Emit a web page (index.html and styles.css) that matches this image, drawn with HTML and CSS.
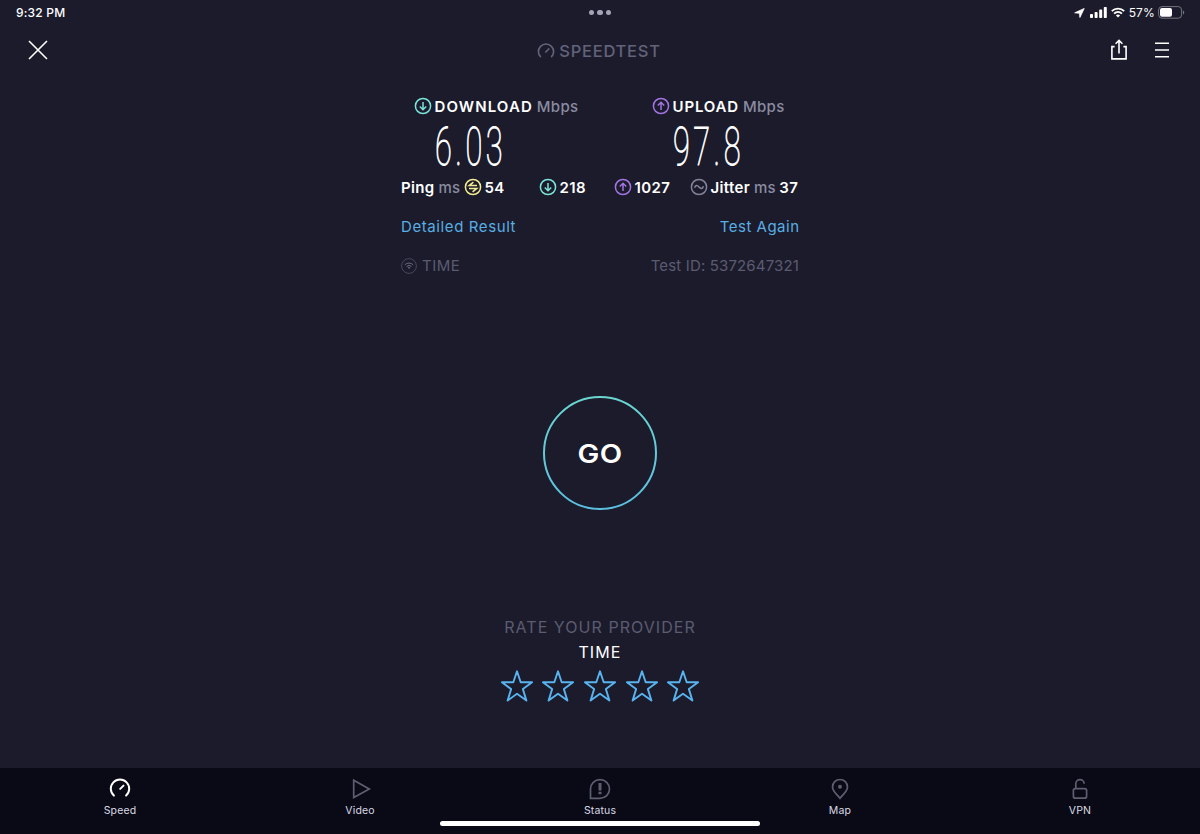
FILE: index.html
```html
<!DOCTYPE html>
<html lang="en">
<head>
  <meta charset="UTF-8" />
  <meta name="viewport" content="width=device-width, initial-scale=1.0" />
  <title>Speedtest</title>
  <link rel="stylesheet" href="styles.css">
</head>
<body>

  <!-- Shared icons -->
  <svg class="symbols" width="0" height="0">
    <symbol id="down" viewBox="0 0 18 18">
      <circle cx="9" cy="9" r="7.6" />
      <path d="M9 5v7.5M5.8 9.5L9 12.7l3.2-3.2" />
    </symbol>
    <symbol id="up" viewBox="0 0 18 18">
      <circle cx="9" cy="9" r="7.6" />
      <path d="M9 13V5.5M5.8 8.5L9 5.3l3.2 3.2" />
    </symbol>
    <symbol id="ping" viewBox="0 0 18 18">
      <circle cx="9" cy="9" r="7.6" />
      <path d="M13 7.6H5.2L9.4 4.2M5 10.4h7.8L8.600 13.8" />
    </symbol>
    <symbol id="jitter" viewBox="0 0 18 18">
      <circle cx="9" cy="9" r="7.6" />
      <path d="M4.6 9.8C5.4 7 7.200 7 9 9s3.600 2 4.400-.8" />
    </symbol>
    <symbol id="star" viewBox="0 0 34 34">
      <path d="M17 2.300l3.700 10.900h11.400l-9.200 6.900 3.500 11.500-9.400-6.900-9.400 6.900 3.500-11.500-9.200-6.900h11.400z" />
    </symbol>
  </svg>

  <div class="status-bar">
    <span class="clock">9:32 PM</span>
    <div class="dots"><i></i><i></i><i></i></div>
    <div class="system">
      <svg width="11" height="10" viewBox="0 0 11 10"><path fill="#fff" stroke="#fff" stroke-width=".8" stroke-linejoin="round" d="M10.200.5L5.900 9.500 5.500 5.300.7 4.800z" /></svg>
      <svg class="signal" width="17" height="11" viewBox="0 0 17 11" fill="#fff">
        <rect x="0" y="7" width="3" height="4" rx=".8" />
        <rect x="4.600" y="5" width="3" height="6" rx=".8" />
        <rect x="9.200" y="2.600" width="3" height="8.400" rx=".8" />
        <rect x="13.800" y="0" width="3" height="11" rx=".8" />
      </svg>
      <svg class="wifi" width="14" height="11" viewBox="0 0 14 11" fill="none" stroke="#fff" stroke-width="1.900">
        <path d="M.8 4.100a9 9 0 0 1 12.400 0M3.100 6.600a5.700 5.700 0 0 1 7.800 0" />
        <path d="M7 10.500L4.900 8.400a3.100 3.100 0 0 1 4.200 0z" fill="#fff" stroke="none" />
      </svg>
      <span class="percent">57%</span>
      <svg width="27" height="13" viewBox="0 0 27 13">
        <rect x=".6" y=".6" width="23" height="11.600" rx="3.400" fill="none" stroke="#76767f" />
        <rect x="2" y="2" width="12" height="8.800" rx="2" fill="#fff" />
        <path d="M25 4.400c1.700.6 1.700 3.400 0 4z" fill="#76767f" />
      </svg>
    </div>
  </div>

  <header class="title-bar">
    <svg class="close" width="20" height="20" viewBox="0 0 20 20"><path d="M1 1l18 18M19 1L1 19" /></svg>
    <div class="brand">
      <svg width="18" height="16" viewBox="0 0 18 16"><path d="M3.800 14.200a7.600 7.600 0 1 1 10.400 0M8.300 9.500l4-4.100" /></svg>
      <span>SPEEDTEST</span>
    </div>
    <div class="actions">
      <svg width="18" height="22" viewBox="0 0 18 22"><path d="M4.600 7.600H1.900v12.300h14.200V7.600h-2.700M9 14.500V1.500M5.600 4.800L9 1.400l3.400 3.400" /></svg>
      <svg width="16" height="16" viewBox="0 0 16 16"><path d="M1 1.200h14M1 8h14M1 14.800h14" /></svg>
    </div>
  </header>

  <main>
    <section class="results">
      <div class="speeds">
        <div class="speed">
          <div class="label">
            <svg class="icon teal"><use href="#down" /></svg>
            <b class="download">DOWNLOAD</b><span class="unit">Mbps</span>
          </div>
          <svg class="value" width="70" height="44"><text x="0" y="40.500" textLength="71" lengthAdjust="spacingAndGlyphs">6.03</text></svg>
        </div>
        <div class="speed">
          <div class="label">
            <svg class="icon purple"><use href="#up" /></svg>
            <b class="upload">UPLOAD</b><span class="unit">Mbps</span>
          </div>
          <svg class="value" width="70" height="44"><text x="0" y="40.500" textLength="71" lengthAdjust="spacingAndGlyphs">97.8</text></svg>
        </div>
      </div>

      <div class="metrics">
        <div class="metric ping"><b>Ping</b><span class="ms">ms</span><svg class="icon yellow"><use href="#ping" /></svg><b>54</b></div>
        <div class="metric low"><svg class="icon teal"><use href="#down" /></svg><b>218</b></div>
        <div class="metric high"><svg class="icon purple"><use href="#up" /></svg><b>1027</b></div>
        <div class="metric jitter"><svg class="icon grey"><use href="#jitter" /></svg><b>Jitter</b><span class="ms">ms</span><b>37</b></div>
      </div>

      <div class="links">
        <a class="detailed">Detailed Result</a>
        <a class="again">Test Again</a>
      </div>

      <div class="info">
        <div class="provider">
          <svg width="16" height="16" viewBox="0 0 16 16">
            <circle cx="8" cy="8" r="7.400" />
            <path class="arc" d="M3.900 6.700a6 6 0 0 1 8.200 0M5.500 8.500a3.700 3.700 0 0 1 5 0" />
            <path class="tip" d="M6.700 9.600a2 2 0 0 1 2.600 0L8 11z" />
          </svg>
          <span>TIME</span>
        </div>
        <span class="test-id">Test ID: 5372647321</span>
      </div>
    </section>

    <button class="go">
      <svg width="116" height="116" viewBox="0 0 116 116">
        <defs>
          <linearGradient id="ring" x1="0" y1="0" x2="0" y2="1">
            <stop offset="0" stop-color="#6bd5d0" />
            <stop offset="1" stop-color="#5bbfe0" />
          </linearGradient>
        </defs>
        <circle cx="58" cy="58" r="56" fill="none" stroke="url(#ring)" stroke-width="2" />
      </svg>
      <span>GO</span>
    </button>

    <section class="rating">
      <div class="rate-title">RATE YOUR PROVIDER</div>
      <div class="rate-name">TIME</div>
      <div class="stars">
        <svg><use href="#star" /></svg>
        <svg><use href="#star" /></svg>
        <svg><use href="#star" /></svg>
        <svg><use href="#star" /></svg>
        <svg><use href="#star" /></svg>
      </div>
    </section>
  </main>

  <nav class="tabs">
    <a class="tab active">
      <svg width="24" height="24" viewBox="0 0 24 24"><path d="M5.900 18.600a9.200 9.200 0 1 1 12.200 0M12.200 11.900l3.300-3.300" /></svg>
      <span>Speed</span>
    </a>
    <a class="tab">
      <svg width="24" height="24" viewBox="0 0 24 24"><path d="M5.700 3.200v17.400L21.300 12z" /></svg>
      <span>Video</span>
    </a>
    <a class="tab">
      <svg width="24" height="24" viewBox="0 0 24 24"><path d="M2.500 21.300V12A9.500 9.300 0 1 1 12 21.300z" /><path class="mark" d="M12 6v7.500M12 14.800v2.400" /></svg>
      <span>Status</span>
    </a>
    <a class="tab">
      <svg width="24" height="24" viewBox="0 0 24 24"><path d="M12 21.300C8.500 17 4.500 14.200 4.500 10a7.500 7.500 0 0 1 15 0c0 4.200-4 7-7.500 11.300z" /><circle class="dot" cx="12" cy="9.800" r="2" /></svg>
      <span>Map</span>
    </a>
    <a class="tab">
      <svg width="24" height="24" viewBox="0 0 24 24"><rect x="5.400" y="11.600" width="13.200" height="9.600" rx="2" /><path d="M7.800 11.600V6.800a4.200 4.200 0 0 1 8.400 0" /></svg>
      <span>VPN</span>
    </a>
    <div class="home-indicator"></div>
  </nav>

</body>
</html>
```
FILE: styles.css
```css
body {
  margin: 0;
  height: 834px;
  display: flex;
  flex-direction: column;
  overflow: hidden;
  background: #1b1b2c;
  color: #fff;
  font-family: Inter, "Liberation Sans", sans-serif;
}

svg {
  display: block;
  flex: none;
}

.symbols {
  position: absolute;
}

/* iPad status bar */
.status-bar {
  display: grid;
  grid-template-columns: 1fr auto 1fr;
  align-items: center;
  height: 25px;
  padding: 0 15px 0 16px;
  font-size: 12px;
}

.clock {
  font-weight: 500;
  letter-spacing: 0.2px;
}

.dots {
  display: flex;
  gap: 3px;
  margin-right: 1px;
}

.dots i {
  width: 5.5px;
  height: 5.5px;
  border-radius: 50%;
  background: #a4a4b6;
}

.system {
  display: flex;
  justify-content: flex-end;
  align-items: center;
}

.signal {
  margin: 0 4px 0 5px;
}

.percent {
  margin: 0 3px 0 4px;
  letter-spacing: 0.15px;
}

/* Title bar */
.title-bar {
  display: grid;
  grid-template-columns: 1fr auto 1fr;
  align-items: center;
  height: 50px;
  padding: 0 30px 0 28px;
}

.title-bar svg {
  fill: none;
  stroke: #fff;
  stroke-width: 1.6;
}

.brand {
  display: flex;
  align-items: center;
  gap: 4px;
  padding-top: 1px;
  color: #62637a;
  font-size: 16.5px;
  font-weight: 500;
  line-height: 20px;
  letter-spacing: 0.75px;
}

.brand svg {
  stroke: #62637a;
}

.actions {
  display: flex;
  align-items: center;
  justify-content: flex-end;
  gap: 26px;
}

/* Results */
main {
  flex: 1;
  display: flex;
  flex-direction: column;
  align-items: center;
}

.results {
  width: 398px;
  padding-top: 21px;
  font-size: 15px;
}

.results b {
  font-weight: 600;
  letter-spacing: 0.35px;
}

.results .download {
  letter-spacing: 1.1px;
}

.results .upload {
  letter-spacing: 0.85px;
}

.speeds {
  display: flex;
  padding-left: 13px;
}

.speed {
  flex: none;
  width: 238px;
}

.label,
.metric {
  display: flex;
  align-items: center;
  height: 20px;
}

.icon {
  width: 18px;
  height: 18px;
  margin-right: 2.5px;
  fill: none;
  stroke-width: 1.5;
}

.teal { stroke: #7be5da; }
.purple { stroke: #a475e2; }
.yellow { stroke: #f3ec93; }
.grey { stroke: #84859a; }

.unit,
.ms {
  color: #8a8b9f;
  font-weight: 500;
}

.unit {
  margin-left: 4px;
  letter-spacing: 0.3px;
}

.value {
  margin: 8px 0 0 21px;
  overflow: visible;
  fill: #fff;
  stroke: #fff;
  stroke-width: 1;
  font-family: Roboto, sans-serif;
  font-size: 53px;
  font-weight: 100;
  letter-spacing: 6px;
}

.metrics {
  display: flex;
  margin-top: 9px;
}

.ms {
  margin: 0 3.5px 0 4px;
  letter-spacing: 0.2px;
}

.ping { width: 138px; }
.low { width: 75px; }
.high { width: 76px; }

.links {
  display: flex;
  justify-content: space-between;
  margin-top: 20px;
  line-height: 20px;
  color: #5aaee3;
}

.detailed {
  letter-spacing: 0.6px;
}

.again {
  margin-right: -0.5px;
  letter-spacing: 0.5px;
}

.info {
  display: flex;
  justify-content: space-between;
  margin-top: 19px;
  line-height: 20px;
  color: #5b5c70;
}

.provider {
  display: flex;
  align-items: center;
  gap: 5px;
  letter-spacing: 0.5px;
}

.provider svg {
  fill: none;
  stroke: #47485b;
}

.provider .arc {
  stroke: #6a6b80;
}

.provider .tip {
  fill: #6a6b80;
  stroke: none;
}

.test-id {
  letter-spacing: 0.15px;
}

/* Go button */
.go {
  display: grid;
  place-items: center;
  margin: 119px 0 0;
  padding: 0;
  border: 0;
  background: none;
  color: #fff;
  font: 600 26px Inter, sans-serif;
  letter-spacing: 0.3px;
}

.go svg,
.go span {
  grid-area: 1 / 1;
}

.go span {
  padding-top: 1px;
  transform: scaleX(1.12);
}

/* Rate your provider */
.rating {
  margin-top: 104px;
  text-align: center;
  font-size: 16px;
  line-height: 24px;
}

.rate-title {
  color: #5b5c70;
  letter-spacing: 1.05px;
}

.rate-name {
  margin-top: 1px;
  letter-spacing: 1.1px;
}

.stars {
  display: flex;
  justify-content: center;
  gap: 7.7px;
  margin-top: 5px;
}

.stars svg {
  width: 34px;
  height: 34px;
  fill: none;
  stroke: #59b3ee;
  stroke-width: 1.9;
  stroke-linejoin: round;
}

/* Bottom tabs */
.tabs {
  position: relative;
  display: grid;
  grid-template-columns: repeat(5, 1fr);
  height: 66px;
  background: #090a16;
}

.tab {
  display: flex;
  flex-direction: column;
  align-items: center;
  padding-top: 9px;
  color: #d9d9e4;
  font-size: 10.5px;
  line-height: 19px;
  letter-spacing: 0.15px;
}

.tab svg {
  fill: none;
  stroke: #5d5e70;
  stroke-width: 1.7;
}

.tab.active svg {
  stroke: #fff;
  stroke-width: 2;
  stroke-linecap: round;
}

.tab .mark {
  stroke-width: 3;
}

.tab .dot {
  fill: #5d5e70;
  stroke: none;
}

.home-indicator {
  position: absolute;
  left: 440px;
  bottom: 8px;
  width: 320px;
  height: 5px;
  border-radius: 3px;
  background: #fff;
}
```
